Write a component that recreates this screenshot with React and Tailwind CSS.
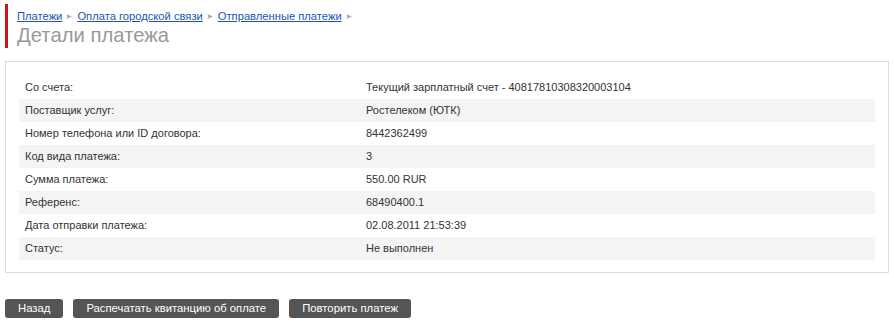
export default function App() {
  const rows = [
    ["Со счета:", "Текущий зарплатный счет - 40817810308320003104"],
    ["Поставщик услуг:", "Ростелеком (ЮТК)"],
    ["Номер телефона или ID договора:", "8442362499"],
    ["Код вида платежа:", "3"],
    ["Сумма платежа:", "550.00 RUR"],
    ["Референс:", "68490400.1"],
    ["Дата отправки платежа:", "02.08.2011 21:53:39"],
    ["Статус:", "Не выполнен"],
  ];
  const crumbs = ["Платежи", "Оплата городской связи", "Отправленные платежи"];
  return (
    <div className="w-[894px] h-[327px] bg-white text-[11px] text-[#333] font-['Liberation_Sans',sans-serif] overflow-hidden">
      <div className="ml-[5px] mt-[4px] border-l-[3px] border-[#c8161d] pl-[9px] pt-[5px] h-[44px]">
        <div className="flex items-center gap-[5px] leading-[14px] text-[11.2px]">
          {crumbs.map((c) => (
            <span key={c} className="flex items-center gap-[5px]">
              <a href="#" className="text-[#1a55b0] underline">{c}</a>
              <span className="text-[#aaa] text-[6px]">▶</span>
            </span>
          ))}
        </div>
        <div className="text-[20.3px] leading-[24px] text-[#999]">Детали платежа</div>
      </div>
      <div className="mx-[5px] w-[884px] mt-[13px] border border-[#ddd] h-[212px] pt-[14px] pl-[13px] pr-[13px]">
        {rows.map(([k, v], i) => (
          <div key={k} className={`flex h-[23px] items-center ${i % 2 ? "bg-[#f4f4f4]" : ""}`}>
            <div className="w-[347px] pl-[6px]">{k}</div>
            <div>{v}</div>
          </div>
        ))}
      </div>
      <div className="flex gap-[10px] ml-[5px] mt-[26px]">
        <button className="h-[19px] px-[13px] rounded-[3px] bg-[#555] text-white text-[11.3px]">Назад</button>
        <button className="h-[19px] px-[13px] rounded-[3px] bg-[#555] text-white text-[11.3px]">Распечатать квитанцию об оплате</button>
        <button className="h-[19px] px-[13px] rounded-[3px] bg-[#555] text-white text-[11.3px]">Повторить платеж</button>
      </div>
    </div>
  );
}
